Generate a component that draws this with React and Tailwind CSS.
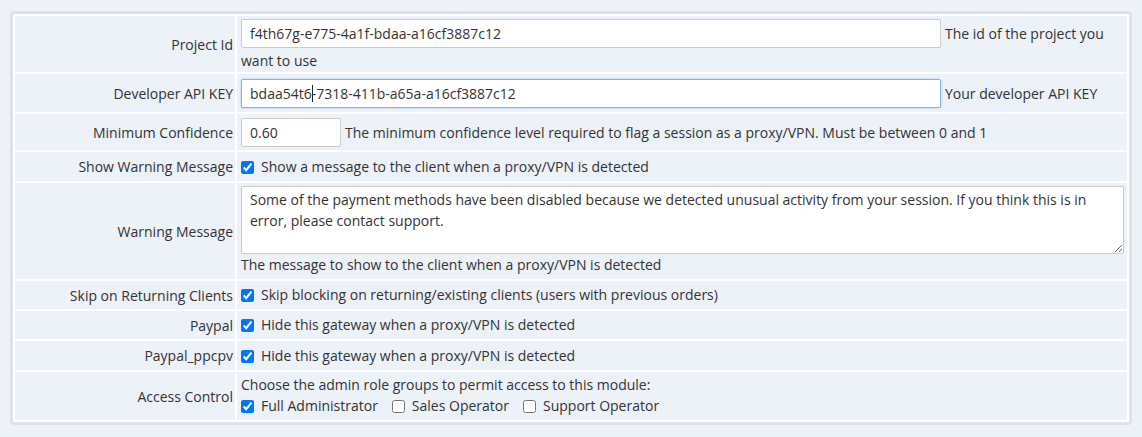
import React from "react";

const font = { fontFamily: '"Open Sans", "Noto Sans", sans-serif' };

function Label({ children }) {
  return (
    <td className="w-[220px] bg-[#edf1f8] pr-[2px] text-right align-middle text-[14px] leading-[21px] text-[#333]">
      {children}
    </td>
  );
}

function Check({ checked, children, className = "" }) {
  return (
    <label className={"inline-flex items-center " + className}>
      <input
        type="checkbox"
        defaultChecked={checked}
        className="m-0 mr-[7px] h-[13px] w-[13px] translate-y-[1px]"
      />
      <span>{children}</span>
    </label>
  );
}

export default function App() {
  return (
    <div className="min-h-[437px] bg-[#edf1f8] px-[10px] pt-[11px]" style={font}>
      <div className="rounded-[4px] border-[3px] border-[#dfe3e8] bg-white">
        <table className="w-full border-separate border-spacing-[2px] text-[14px] leading-[21px] text-[#333]">
          <tbody>
            <tr>
              <Label>Project Id</Label>
              <td className="h-[56px] bg-[#edf1f8] pl-[4px] pr-[2px] pt-[3px] pb-[1px] align-top">
                <input
                  type="text"
                  defaultValue="f4th67g-e775-4a1f-bdaa-a16cf3887c12"
                  className="mr-[4px] h-[29px] w-[700px] rounded-[2px] border border-[#cccccc] bg-white px-[8px] align-middle text-[14px] text-[#333] outline-none"
                />
                <span className="align-middle">The id of the project you want to use</span>
              </td>
            </tr>
            <tr>
              <Label>Developer API KEY</Label>
              <td className="h-[38px] bg-[#edf1f8] pl-[4px] pr-[2px] align-middle">
                <div className="flex items-center">
                  <div className="mr-[4px] flex h-[29px] w-[700px] items-center rounded-[2px] border border-[#7cb5ec] bg-white px-[8px] shadow-[0_0_2px_rgba(102,175,233,0.6)]">
                    <span>bdaa54t6</span>
                    <span className="-mr-px inline-block h-[17px] w-px bg-[#222]" />
                    <span>-7318-411b-a65a-a16cf3887c12</span>
                  </div>
                  <span>Your developer API KEY</span>
                </div>
              </td>
            </tr>
            <tr>
              <Label>Minimum Confidence</Label>
              <td className="h-[36px] bg-[#edf1f8] pl-[4px] pr-[2px] align-middle">
                <div className="flex items-center">
                  <input
                    type="text"
                    defaultValue="0.60"
                    className="mr-[4px] h-[29px] w-[100px] rounded-[2px] border border-[#cccccc] bg-white px-[8px] text-[14px] text-[#333] outline-none"
                  />
                  <span>
                    The minimum confidence level required to flag a session as a proxy/VPN. Must be between 0 and 1
                  </span>
                </div>
              </td>
            </tr>
            <tr>
              <Label>Show Warning Message</Label>
              <td className="h-[29px] bg-[#edf1f8] pl-[4px] pr-[2px] align-middle">
                <Check checked>Show a message to the client when a proxy/VPN is detected</Check>
              </td>
            </tr>
            <tr>
              <Label>Warning Message</Label>
              <td className="h-[96px] bg-[#edf1f8] pl-[4px] pr-[3px] pt-[3px] pb-[2px] align-top">
                <textarea
                  defaultValue="Some of the payment methods have been disabled because we detected unusual activity from your session. If you think this is in error, please contact support."
                  className="block h-[68px] w-full resize-y rounded-[2px] border border-[#cccccc] bg-white px-[8px] pt-[2px] text-[14px] leading-[21px] text-[#333] outline-none"
                />
                <div>The message to show to the client when a proxy/VPN is detected</div>
              </td>
            </tr>
            <tr>
              <Label>Skip on Returning Clients</Label>
              <td className="h-[28px] bg-[#edf1f8] pl-[4px] pr-[2px] align-middle">
                <Check checked>Skip blocking on returning/existing clients (users with previous orders)</Check>
              </td>
            </tr>
            <tr>
              <Label>Paypal</Label>
              <td className="h-[28px] bg-[#edf1f8] pl-[4px] pr-[2px] align-middle">
                <Check checked>Hide this gateway when a proxy/VPN is detected</Check>
              </td>
            </tr>
            <tr>
              <Label>Paypal_ppcpv</Label>
              <td className="h-[29px] bg-[#edf1f8] pl-[4px] pr-[2px] align-middle">
                <Check checked>Hide this gateway when a proxy/VPN is detected</Check>
              </td>
            </tr>
            <tr>
              <Label>Access Control</Label>
              <td className="h-[48px] bg-[#edf1f8] pl-[4px] pr-[2px] pt-[2px] pb-[4px] align-top">
                <div>Choose the admin role groups to permit access to this module:</div>
                <div className="flex items-center">
                  <Check checked className="mr-[14px]">Full Administrator</Check>
                  <Check className="mr-[14px]">Sales Operator</Check>
                  <Check>Support Operator</Check>
                </div>
              </td>
            </tr>
          </tbody>
        </table>
      </div>
    </div>
  );
}
